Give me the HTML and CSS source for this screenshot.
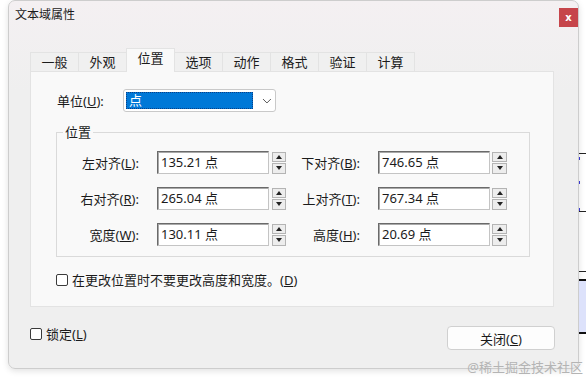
FILE: index.html
```html
<!DOCTYPE html>
<html lang="zh-CN">
<head>
    <meta charset="UTF-8">
    <title>文本域属性</title>
    <link rel="stylesheet" href="styles.css">
</head>
<body>
<div class="page">
    <div class="dialog">
        <div class="titlebar">
            <span class="title">文本域属性</span>
            <button class="close-x">x</button>
        </div>
        <div class="content">
            <div class="tabs">
                <div class="tab">一般</div>
                <div class="tab">外观</div>
                <div class="tab active">位置</div>
                <div class="tab">选项</div>
                <div class="tab">动作</div>
                <div class="tab">格式</div>
                <div class="tab">验证</div>
                <div class="tab">计算</div>
            </div>
            <div class="panel">
                <div class="unit-row">
                    <span class="unit-label">单位(<u>U</u>):</span>
                    <div class="select">
                        <span class="select-value">点</span>
                        <svg class="chevron" width="10" height="6" viewBox="0 0 10 6"><path d="M1 1 L5 5 L9 1" fill="none" stroke="#555" stroke-width="1"/></svg>
                    </div>
                </div>

                <fieldset class="group">
                    <legend>位置</legend>
                    <div class="row">
                        <span class="lab lab-left">左对齐(<u>L</u>):</span>
                        <span class="num">135.21 点</span>
                        <span class="spin"><span class="spin-btn up"></span><span class="spin-btn down"></span></span>
                        <span class="lab lab-right">下对齐(<u>B</u>):</span>
                        <span class="num">746.65 点</span>
                        <span class="spin spin-r"><span class="spin-btn up"></span><span class="spin-btn down"></span></span>
                    </div>
                    <div class="row">
                        <span class="lab lab-left">右对齐(<u>R</u>):</span>
                        <span class="num">265.04 点</span>
                        <span class="spin"><span class="spin-btn up"></span><span class="spin-btn down"></span></span>
                        <span class="lab lab-right">上对齐(<u>T</u>):</span>
                        <span class="num">767.34 点</span>
                        <span class="spin spin-r"><span class="spin-btn up"></span><span class="spin-btn down"></span></span>
                    </div>
                    <div class="row">
                        <span class="lab lab-left">宽度(<u>W</u>):</span>
                        <span class="num">130.11 点</span>
                        <span class="spin"><span class="spin-btn up"></span><span class="spin-btn down"></span></span>
                        <span class="lab lab-right">高度(<u>H</u>):</span>
                        <span class="num">20.69 点</span>
                        <span class="spin spin-r"><span class="spin-btn up"></span><span class="spin-btn down"></span></span>
                    </div>
                </fieldset>

                <div class="check keep-size"><span class="box"></span>在更改位置时不要更改高度和宽度。(<u>D</u>)</div>
            </div>
            <div class="footer">
                <div class="check"><span class="box"></span>锁定(<u>L</u>)</div>
                <button class="btn">关闭(<u>C</u>)</button>
            </div>
        </div>
    </div>

    <!-- bits of the document behind the dialog -->
    <div class="edge">
        <div class="edge-line" style="margin-top: 153px"></div>
        <div class="edge-dash" style="margin-top: 3px"></div>
        <div class="edge-dash" style="margin-top: 21px"></div>
        <div class="edge-dash" style="margin-top: 24px"></div>
        <div class="edge-line" style="margin-top: 0"></div>
        <div class="edge-line" style="margin-top: 59px"></div>
        <div class="edge-fill"></div>
    </div>

    <div class="watermark">@稀土掘金技术社区</div>
</div>
</body>
</html>
```

FILE: styles.css
```css
body {
    margin: 0;
    font-family: "Noto Sans", "Noto Sans CJK SC", sans-serif;
    font-size: 13px;
    color: #1b1b1b;
    background: #fff;
}

u {
    text-decoration: underline;
    text-underline-offset: 1px;
}

.page {
    position: relative;
    display: flex;
    width: 586px;
    height: 377px;
    overflow: hidden;
    background: #fff;
}

.dialog {
    width: 571px;
    height: 369px;
    margin-left: 8px;
    box-sizing: border-box;
    border: 1px solid #cdcdcd;
    border-radius: 7px;
    background: linear-gradient(#f4f0f2, #efefef 90px);
    box-shadow: 0 2px 6px rgba(0, 0, 0, 0.12);
    display: flex;
    flex-direction: column;
}

.titlebar {
    height: 29px;
    display: flex;
    justify-content: space-between;
    align-items: flex-start;
}

.title {
    margin: 6px 0 0 6px;
    font-size: 12px;
    line-height: 16px;
}

.close-x {
    width: 19px;
    height: 19px;
    margin-top: 7px;
    padding: 0;
    border: none;
    background: #c6454b;
    color: #fff;
    font-family: "DejaVu Sans", sans-serif;
    font-size: 10px;
    font-weight: bold;
    line-height: 17px;
}

.content {
    padding: 0 24px 0 21px;
}

/* tabs */
.tabs {
    display: flex;
    align-items: flex-end;
    height: 23px;
    margin-top: 18px;
}

.tab {
    width: 49px;
    height: 19px;
    margin-right: -1px;
    box-sizing: border-box;
    border: 1px solid #e3e3e3;
    border-bottom: none;
    background: #f0f0f0;
    text-align: center;
    line-height: 19px;
}

.tab.active {
    height: 24px;
    margin-bottom: -1px;
    position: relative;
    z-index: 1;
    background: #f9f9f9;
    line-height: 19px;
}

.panel {
    height: 236px;
    box-sizing: border-box;
    border: 1px solid #e3e3e3;
    background: #f9f9f9;
    padding: 17px 0 0 25px;
}

/* unit select */
.unit-row {
    display: flex;
    align-items: center;
    height: 23px;
}

.unit-label {
    width: 66px;
    margin-left: 1px;
}

.select {
    width: 153px;
    height: 23px;
    box-sizing: border-box;
    border: 1px solid #c9c9c9;
    border-radius: 3px;
    background: #fff;
    display: flex;
    align-items: center;
    padding: 0 3px 0 2px;
}

.select-value {
    width: 129px;
    height: 17px;
    box-sizing: border-box;
    border: 1px dotted #0a3f86;
    background: #0078d7;
    color: #fff;
    line-height: 15px;
    padding-left: 2px;
}

.chevron {
    margin-left: 9px;
}

/* group box */
.group {
    width: 474px;
    margin: 11px 0 0 0;
    padding: 10px 0 10px 0;
    box-sizing: border-box;
    border: 1px solid #dadada;
    min-inline-size: 0;
}

.group legend {
    margin-left: 6px;
    padding: 0 2px;
    line-height: 18px;
}

.row {
    display: flex;
    align-items: center;
    height: 23px;
}

.row + .row {
    margin-top: 13px;
}

.lab {
    text-align: right;
    margin-right: 18px;
}

.lab-left {
    width: 82px;
}

.lab-right {
    width: 74px;
}

.num {
    width: 112px;
    height: 23px;
    box-sizing: border-box;
    border: 1px solid;
    border-color: #6a6a6a #c4c4c4 #c4c4c4 #6a6a6a;
    box-shadow: inset 1px 1px 0 #a9a9a9;
    background: #fff;
    padding-left: 3px;
    line-height: 21px;
}

.spin {
    width: 14px;
    height: 22px;
    margin-left: 3px;
    display: flex;
    flex-direction: column;
    gap: 1px;
}

.spin-r {
    width: 15px;
    margin-left: 2px;
}

.spin-btn {
    flex: 1;
    box-sizing: border-box;
    border: 1px solid #b4b4b4;
    background: #ededed;
    display: flex;
    align-items: center;
    justify-content: center;
}

.spin-btn::after {
    content: "";
    border-left: 3px solid transparent;
    border-right: 3px solid transparent;
}

.spin-btn.up::after {
    border-bottom: 4px solid #222;
}

.spin-btn.down::after {
    border-top: 4px solid #222;
}

/* checkboxes */
.check {
    display: flex;
    align-items: center;
    line-height: 16px;
}

.box {
    width: 12px;
    height: 12px;
    box-sizing: border-box;
    border: 1px solid #3a3a3a;
    border-radius: 2px;
    background: #fff;
    margin-right: 4px;
}

.keep-size {
    margin-top: 15px;
}

.footer {
    display: flex;
    justify-content: space-between;
    align-items: flex-start;
    margin-top: 19px;
}

.footer .check {
    margin-left: 0;
}

.btn {
    width: 108px;
    height: 24px;
    margin-right: -1px;
    border: 1px solid #d0d0d0;
    border-radius: 4px;
    background: #fdfdfd;
    font-family: "Noto Sans", "Noto Sans CJK SC", sans-serif;
    font-size: 13px;
    color: #1b1b1b;
    padding: 0;
}

/* page behind the dialog */
.edge {
    width: 7px;
    display: flex;
    flex-direction: column;
}

.edge-line {
    height: 1px;
    background: #222;
}

.edge-dash {
    width: 1px;
    height: 3px;
    background: #3a3ad0;
}

.edge-fill {
    margin-top: 7px;
    height: 55px;
    box-sizing: border-box;
    border-top: 2px solid #111;
    border-bottom: 2px solid #111;
    background: #dde2fb;
}

.watermark {
    position: absolute;
    right: 3px;
    bottom: 1px;
    color: #b4b4b4;
    font-size: 13px;
    line-height: 18px;
}
```
